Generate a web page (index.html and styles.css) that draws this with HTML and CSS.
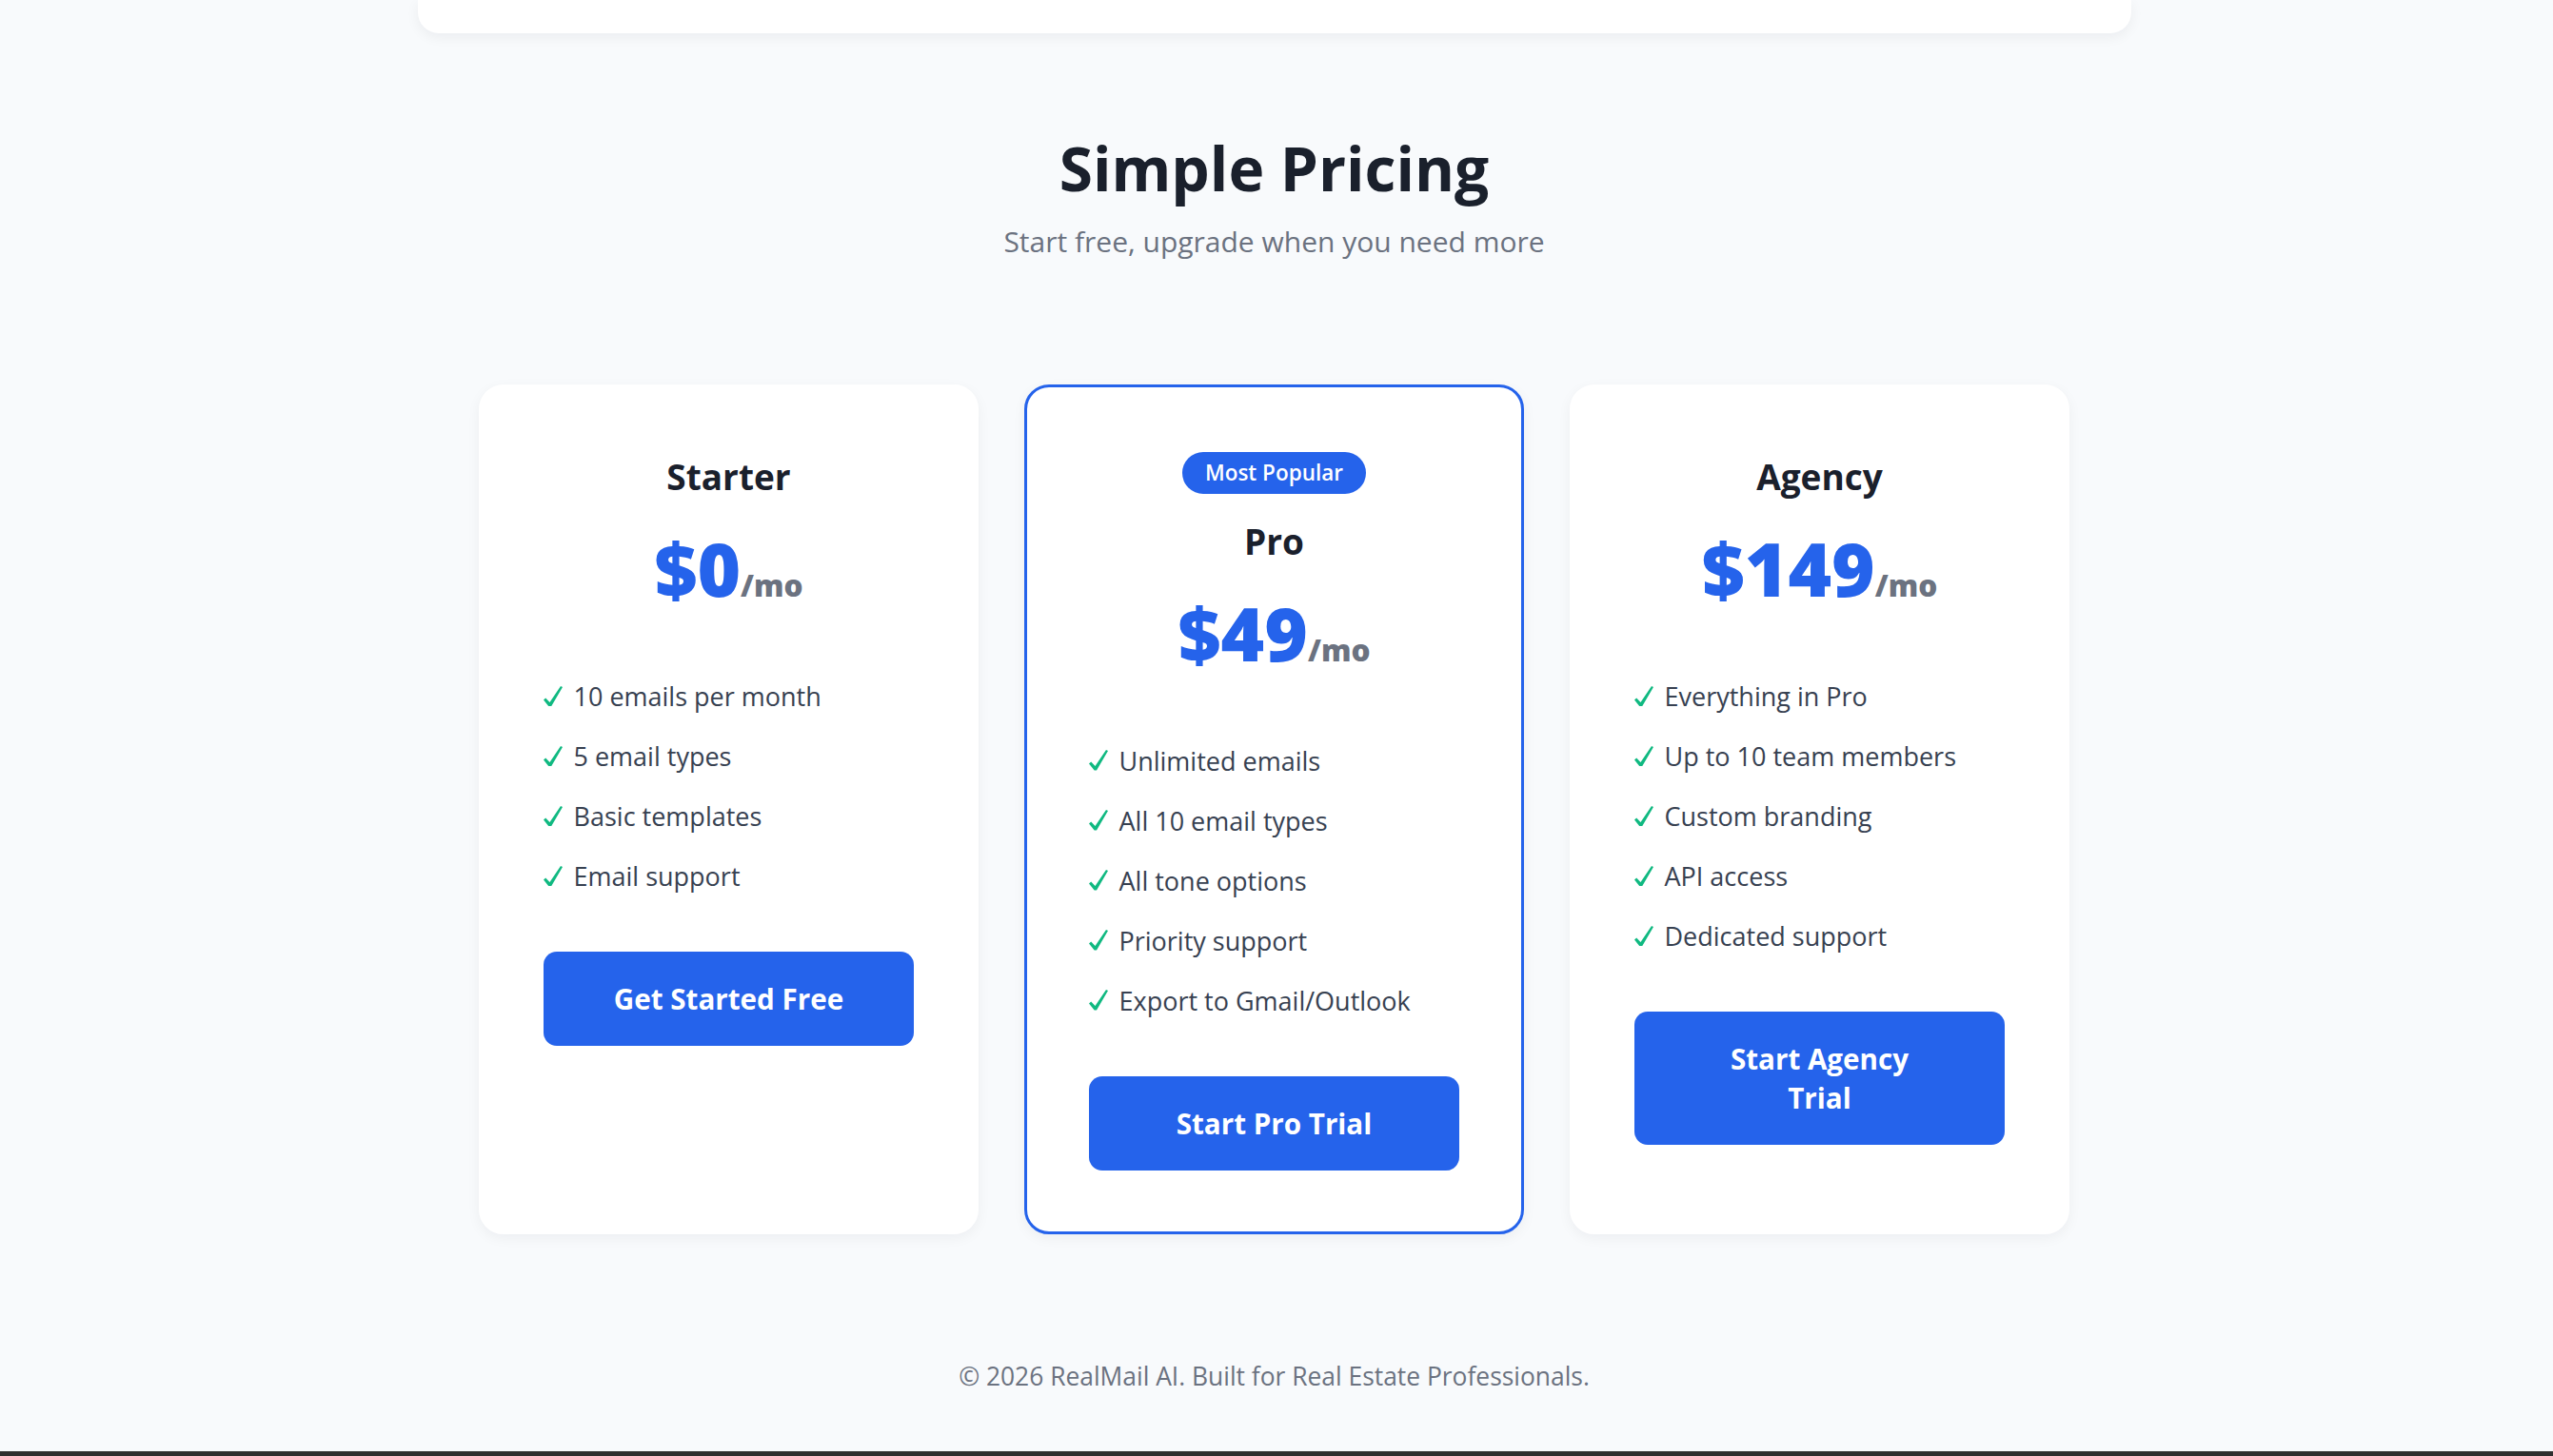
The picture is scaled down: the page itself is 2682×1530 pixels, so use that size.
FILE: index.html
```html
<!DOCTYPE html>
<html lang="en">
<head>
<meta charset="utf-8">
<title>RealMail AI — Pricing</title>
<link rel="stylesheet" href="styles.css">
</head>
<body>
<div class="page">
  <div class="prev-card"></div>
  <section class="pricing">
    <h2 class="title">Simple Pricing</h2>
    <p class="subtitle">Start free, upgrade when you need more</p>
    <div class="plans">
      <div class="plan">
        <h3 class="plan-name">Starter</h3>
        <div class="price"><span class="amount">$0</span><span class="per">/mo</span></div>
        <ul class="features">
          <li><svg class="check" viewBox="0 0 20 21.5" aria-hidden="true"><path d="M0 14.4 L2.2 12.4 L6.5 17.0 L18 0 L20 0.9 L8 21.5 L5.6 21.5 Z"/></svg>10 emails per month</li>
          <li><svg class="check" viewBox="0 0 20 21.5" aria-hidden="true"><path d="M0 14.4 L2.2 12.4 L6.5 17.0 L18 0 L20 0.9 L8 21.5 L5.6 21.5 Z"/></svg>5 email types</li>
          <li><svg class="check" viewBox="0 0 20 21.5" aria-hidden="true"><path d="M0 14.4 L2.2 12.4 L6.5 17.0 L18 0 L20 0.9 L8 21.5 L5.6 21.5 Z"/></svg>Basic templates</li>
          <li><svg class="check" viewBox="0 0 20 21.5" aria-hidden="true"><path d="M0 14.4 L2.2 12.4 L6.5 17.0 L18 0 L20 0.9 L8 21.5 L5.6 21.5 Z"/></svg>Email support</li>
        </ul>
        <a class="btn" href="#">Get Started Free</a>
      </div>
      <div class="plan plan-featured">
        <span class="badge">Most Popular</span>
        <h3 class="plan-name">Pro</h3>
        <div class="price"><span class="amount">$49</span><span class="per">/mo</span></div>
        <ul class="features">
          <li><svg class="check" viewBox="0 0 20 21.5" aria-hidden="true"><path d="M0 14.4 L2.2 12.4 L6.5 17.0 L18 0 L20 0.9 L8 21.5 L5.6 21.5 Z"/></svg>Unlimited emails</li>
          <li><svg class="check" viewBox="0 0 20 21.5" aria-hidden="true"><path d="M0 14.4 L2.2 12.4 L6.5 17.0 L18 0 L20 0.9 L8 21.5 L5.6 21.5 Z"/></svg>All 10 email types</li>
          <li><svg class="check" viewBox="0 0 20 21.5" aria-hidden="true"><path d="M0 14.4 L2.2 12.4 L6.5 17.0 L18 0 L20 0.9 L8 21.5 L5.6 21.5 Z"/></svg>All tone options</li>
          <li><svg class="check" viewBox="0 0 20 21.5" aria-hidden="true"><path d="M0 14.4 L2.2 12.4 L6.5 17.0 L18 0 L20 0.9 L8 21.5 L5.6 21.5 Z"/></svg>Priority support</li>
          <li><svg class="check" viewBox="0 0 20 21.5" aria-hidden="true"><path d="M0 14.4 L2.2 12.4 L6.5 17.0 L18 0 L20 0.9 L8 21.5 L5.6 21.5 Z"/></svg>Export to Gmail/Outlook</li>
        </ul>
        <a class="btn" href="#">Start Pro Trial</a>
      </div>
      <div class="plan">
        <h3 class="plan-name">Agency</h3>
        <div class="price"><span class="amount">$149</span><span class="per">/mo</span></div>
        <ul class="features">
          <li><svg class="check" viewBox="0 0 20 21.5" aria-hidden="true"><path d="M0 14.4 L2.2 12.4 L6.5 17.0 L18 0 L20 0.9 L8 21.5 L5.6 21.5 Z"/></svg>Everything in Pro</li>
          <li><svg class="check" viewBox="0 0 20 21.5" aria-hidden="true"><path d="M0 14.4 L2.2 12.4 L6.5 17.0 L18 0 L20 0.9 L8 21.5 L5.6 21.5 Z"/></svg>Up to 10 team members</li>
          <li><svg class="check" viewBox="0 0 20 21.5" aria-hidden="true"><path d="M0 14.4 L2.2 12.4 L6.5 17.0 L18 0 L20 0.9 L8 21.5 L5.6 21.5 Z"/></svg>Custom branding</li>
          <li><svg class="check" viewBox="0 0 20 21.5" aria-hidden="true"><path d="M0 14.4 L2.2 12.4 L6.5 17.0 L18 0 L20 0.9 L8 21.5 L5.6 21.5 Z"/></svg>API access</li>
          <li><svg class="check" viewBox="0 0 20 21.5" aria-hidden="true"><path d="M0 14.4 L2.2 12.4 L6.5 17.0 L18 0 L20 0.9 L8 21.5 L5.6 21.5 Z"/></svg>Dedicated support</li>
        </ul>
        <a class="btn" href="#">Start Agency<br>Trial</a>
      </div>
    </div>
  </section>
  <footer class="footer">© 2026 RealMail AI. Built for Real Estate Professionals.</footer>
</div>
<div class="taskbar"></div>
</body>
</html>
```

FILE: styles.css
```css
* { box-sizing: border-box; }
html, body { margin: 0; padding: 0; }
body {
  background: #f8fafc;
  font-family: "Open Sans", "Noto Sans", sans-serif;
  color: #1a202c;
  overflow: hidden;
}
.page {
  height: 1525px;
  padding-right: 5px;
  display: flex;
  flex-direction: column;
  align-items: center;
  overflow: hidden;
}
.prev-card {
  flex: none;
  width: 1800px;
  height: 35px;
  background: #fff;
  border-radius: 0 0 22px 22px;
  box-shadow: 0 4px 14px rgba(15, 23, 42, 0.06);
}
.pricing {
  width: 1671px;
  display: flex;
  flex-direction: column;
  align-items: center;
  padding-top: 102px;
}
.title {
  margin: 0;
  font-size: 64px;
  font-weight: 700;
  line-height: 80px;
  color: #1a202c;
}
.subtitle {
  margin: 17px 0 0;
  font-size: 30px;
  line-height: 40px;
  color: #6b7280;
}
.plans {
  margin-top: 130px;
  display: grid;
  grid-template-columns: repeat(3, 525px);
  gap: 48px;
}
.plan {
  display: flex;
  flex-direction: column;
  background: #fff;
  border: 3.5px solid #ffffff;
  border-radius: 26px;
  padding: 64px 65px;
  box-shadow: 0 4px 14px rgba(15, 23, 42, 0.05);
}
.plan-featured {
  border-color: #2563eb;
}
.badge {
  align-self: center;
  margin: 3.5px 0 20px;
  height: 44px;
  padding: 0 24px;
  border-radius: 22px;
  background: #2563eb;
  color: #fff;
  font-size: 22.5px;
  font-weight: 600;
  line-height: 44px;
}
.plan-name {
  margin: 0;
  padding-top: 2px;
  text-align: center;
  font-size: 37px;
  font-weight: 700;
  line-height: 56px;
  color: #1a202c;
}
.price {
  margin-top: 18px;
  text-align: center;
  font-size: 78px;
  line-height: 100px;
  white-space: nowrap;
}
.amount {
  font-weight: 800;
  color: #2563eb;
}
.per {
  font-size: 31.5px;
  font-weight: 800;
  color: #6b7280;
  line-height: 1;
}
.features {
  list-style: none;
  margin: 53px 0 0;
  padding: 0;
}
.features li {
  font-size: 27px;
  line-height: 63px;
  color: #374151;
  white-space: nowrap;
}
.check {
  width: 20px;
  height: 21.5px;
  margin-right: 11.5px;
  fill: #10b981;
  vertical-align: baseline;
}
.btn {
  display: block;
  margin-top: 48px;
  padding: 29px 20px;
  border-radius: 14px;
  background: #2563eb;
  color: #fff;
  text-align: center;
  text-decoration: none;
  font-size: 29.6px;
  font-weight: 700;
  line-height: 41px;
}
.footer {
  margin-top: 129px;
  font-size: 26.4px;
  line-height: 40px;
  color: #6b7280;
}
.taskbar {
  height: 5px;
  background: #2f2f2f;
}
```
